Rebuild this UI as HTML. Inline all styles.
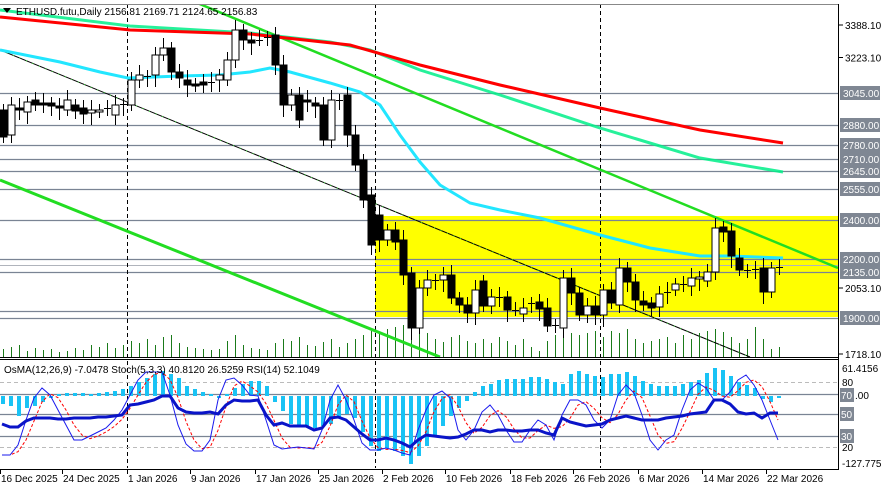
<!DOCTYPE html><html><head><meta charset="utf-8"><style>
html,body{margin:0;padding:0;background:#fff;overflow:hidden}
svg{display:block;font-family:"Liberation Sans",sans-serif}
</style></head><body>
<svg id="c" width="882" height="487" xmlns="http://www.w3.org/2000/svg">
<rect width="882" height="487" fill="#fff"/>
</svg>
<script>
const W=838;let s='';const F=10;
const py=p=>25+(3388.1-p)*0.197;
s+=`<rect x="375" y="216" width="463" height="101" fill="#ffff00"/>`;
[3045,2880,2780,2710,2645,2555,2400,2200,2135,1935,1900].forEach(p=>{const y=Math.round(py(p))+0.5;s+=`<line x1="0" x2="${W}" y1="${y}" y2="${y}" stroke="#7a8494" stroke-width="1.3"/>`});
s+=`<line x1="0" x2="${W}" y1="265.5" y2="265.5" stroke="#b0b4bc"/>`;
[127,375,600].forEach(x=>{s+=`<line x1="${x+.5}" x2="${x+.5}" y1="4" y2="468" stroke="#000" stroke-dasharray="4,3"/>`});
const vh=[8,10,12,6,9,7,8,5,6,9,7,12,10,14,9,12,16,14,18,12,20,22,14,10,9,8,7,8,16,22,12,9,8,7,14,18,16,20,12,11,15,18,10,14,18,22,26,25,28,30,32,35,30,24,18,15,20,22,16,14,18,14,20,16,12,18,10,6,16,22,28,24,22,24,26,20,26,24,28,18,14,16,18,20,14,22,18,24,26,28,25,20,14,18,30,18,8,10];
vh.forEach((h,i)=>{const x=8*i+3.5;s+=`<line x1="${x}" x2="${x}" y1="357" y2="${357-h}" stroke="#1a7a1a"/>`});
s+=`<line x1="0" y1="50" x2="750" y2="357" stroke="#000" stroke-width="1"/>`;
s+=`<line x1="0" y1="50" x2="750" y2="357" stroke="#33dd33" stroke-width="1" stroke-dasharray="1,6"/>`;
s+=`<line x1="0" y1="180" x2="440" y2="357" stroke="#22dd22" stroke-width="3"/>`;
s+=`<line x1="190" y1="0" x2="838" y2="268" stroke="#22dd22" stroke-width="2.5"/>`;
s+=`<polyline fill="none" stroke="#00ee88" stroke-opacity=".85" stroke-width="3" points="0,10 130,26 250,33 330,42 370,50 420,70 500,95 600,128 700,158 783,172"/>`;
s+=`<polyline fill="none" stroke="#ff0000" stroke-width="3" points="0,17 130,30 250,34 350,45 420,65 500,85 600,108 700,130 783,143"/>`;
s+=`<polyline fill="none" stroke="#22e6ff" stroke-width="3" points="0,50 60,62 100,72 128,78 180,76 220,75 250,72 270,68 290,72 330,83 360,92 380,105 400,135 420,162 440,185 470,203 500,210 540,218 600,235 650,248 700,256 730,256 783,258"/>`;
const C=[[110,137],[135,105],[108,110],[112,102],[100,105],[103,105],[103,106],[106,108],[110,100],[105,111],[108,114],[113,110],[112,110],[108,108],[115,105],[104,104],[105,80],[80,75],[77,76],[75,55],[55,48],[48,72],[72,78],[80,85],[84,86],[82,85],[82,82],[80,75],[80,60],[60,30],[30,40],[40,43],[40,40],[38,37],[35,65],[65,105],[105,95],[95,120],[100,102],[103,106],[105,140],[140,100],[100,100],[95,135],[135,165],[160,200],[195,245],[215,240],[240,230],[230,242],[240,275],[273,328],[328,288],[288,280],[280,280],[280,275],[275,298],[298,305],[305,313],[313,290],[281,306],[306,297],[297,297],[297,310],[310,310],[314,308],[303,303],[302,309],[308,326],[325,325],[328,278],[278,293],[293,315],[315,306],[306,315],[315,290],[290,303],[305,268],[268,282],[282,300],[301,305],[303,308],[307,294],[292,292],[290,284],[284,284],[286,278],[279,277],[281,272],[272,228],[227,232],[231,256],[258,270],[270,270],[269,269],[268,292],[292,268],[267,267]];
C.forEach(([o,c],i)=>{const x=8*i+3;const t=Math.min(o,c),b=Math.max(o,c);const hi=t-6-(i%3)*2,lo=b+6+(i%4)*2;
s+=`<line x1="${x+.5}" x2="${x+.5}" y1="${hi}" y2="${lo}" stroke="#000"/>`;
if(b-t<2)s+=`<line x1="${x-3}" x2="${x+4}" y1="${t+.5}" y2="${t+.5}" stroke="#000"/>`;
else s+=`<rect x="${x-3}" y="${t}" width="7" height="${b-t}" fill="${c<o?'#fff':'#000'}" stroke="#000"/>`});
s+=`<rect x="0" y="0" width="${W}" height="4" fill="#fff"/><line x1="0" x2="${W}" y1="4.5" y2="4.5" stroke="#888"/>`;
s+=`<line x1="${W}.5" x2="${W}.5" y1="4" y2="470" stroke="#000"/>`;
s+=`<line x1="0" x2="${W}" y1="357.5" y2="357.5" stroke="#000"/><line x1="0" x2="${W}" y1="359.5" y2="359.5" stroke="#000"/><line x1="0" x2="${W}" y1="469.5" y2="469.5" stroke="#000"/>`;
s+=`<text x="16" y="15" font-size="${F}">ETHUSD.futu,Daily  2156.81 2169.71 2124.65 2156.83</text><path d="M3 8h8l-4 5z" fill="#000"/>`;
[[3388.1,'3388.10'],[3223.1,'3223.10'],[2053.1,'2053.10'],[1718.1,'1718.10']].forEach(([p,t])=>{const y=py(p);s+=`<line x1="838" x2="843" y1="${y}" y2="${y}" stroke="#000"/><text x="845" y="${y+4}" font-size="${F}">${t}</text>`});
[[3045,'3045.00'],[2880,'2880.00'],[2780,'2780.00'],[2710,'2710.00'],[2645,'2645.00'],[2555,'2555.00'],[2400,'2400.00'],[2200,'2200.00'],[2135,'2135.00'],[1900,'1900.00']].forEach(([p,t])=>{const y=Math.round(py(p));s+=`<rect x="840" y="${y-7}" width="40" height="14" fill="#7f8793"/><text x="843" y="${y+4}" font-size="${F}" fill="#fff">${t}</text>`});
s+=`<line x1="0" x2="${W}" y1="382.5" y2="382.5" stroke="#bbb" stroke-dasharray="4,3"/><line x1="0" x2="${W}" y1="447.5" y2="447.5" stroke="#bbb" stroke-dasharray="4,3"/>`;
[394,414,436].forEach(y=>s+=`<line x1="0" x2="${W}" y1="${y+.5}" y2="${y+.5}" stroke="#7a8494" stroke-width="1.3"/>`);
const O=[-8,-10,-20,-12,-10,-6,-2,2,3,3,3,2,3,4,5,7,10,14,18,22,25,22,18,10,7,4,2,-2,2,8,12,15,15,10,-6,-15,-28,-30,-30,-32,-30,-28,-22,-18,-22,-36,-50,-55,-52,-55,-60,-68,-60,-50,-40,-30,-20,-12,-5,4,10,12,16,17,17,17,19,19,17,14,12,22,25,22,20,19,22,22,24,20,15,12,10,10,10,12,14,16,23,28,26,20,14,11,8,-3,-6,-2];
O.forEach((v,i)=>{const x=8*i+1;s+=`<rect x="${x}" y="${v>0?396-v:396}" width="4" height="${Math.abs(v)}" fill="#19c3f5"/>`});
const St=[455,455,445,420,398,388,395,410,425,440,440,436,432,428,420,410,395,380,372,372,372,395,425,444,451,451,440,400,380,378,385,395,396,420,445,449,448,447,448,449,430,400,385,400,420,443,450,450,448,450,453,455,430,410,395,391,398,430,440,430,412,405,415,430,442,442,430,420,425,440,415,400,400,405,420,428,420,395,385,393,415,440,450,440,435,410,390,383,388,400,400,392,380,375,385,400,420,440,452,459,444,425];
const pts=a=>a.map((y,i)=>`${8*i+2},${y}`).join(' ');
const Sg=St.map((v,i)=>i<2?v:(St[i]+St[i-1]+St[i-2])/3);
s+=`<polyline fill="none" stroke="#f00" stroke-dasharray="3,2" points="${pts(Sg.slice(0,98))}"/>`;
s+=`<polyline fill="none" stroke="#1a1aee" points="${pts(St.slice(0,98))}"/>`;
const R=[424,427,427,421,418,418,418,419,419,418,418,418,417,417,416,415,405,404,402,400,396,396,408,412,413,413,412,414,405,400,401,401,400,415,425,423,426,426,426,430,428,418,417,420,427,434,440,440,438,440,443,447,440,435,436,437,438,437,434,430,430,432,430,430,431,431,430,430,433,435,418,422,424,426,425,424,420,418,416,418,420,420,420,418,417,416,414,413,412,400,400,404,412,414,413,418,413,413];
s+=`<polyline fill="none" stroke="#0a14c8" stroke-width="3" points="${pts(R)}"/>`;
s+=`<text x="4" y="373" font-size="${F}">OsMA(12,26,9) -7.0478  Stoch(5,3,3) 40.8120 26.5259  RSI(14) 52.1049</text>`;
[[368,'61.4156'],[382,'80'],[447,'20'],[463,'-127.7756']].forEach(([y,t])=>s+=`<text x="842" y="${y+4}" font-size="${F}">${t}</text>`);
[[395,'70'],[414,'50'],[436,'30']].forEach(([y,t])=>s+=`<rect x="840" y="${y-7}" width="14" height="14" fill="#7f8793"/><text x="841" y="${y+4}" font-size="${F}" fill="#fff">${t}</text>`);
s+=`<text x="855" y="399" font-size="${F}">.00</text>`;
['16 Dec 2025','24 Dec 2025','1 Jan 2026','9 Jan 2026','17 Jan 2026','25 Jan 2026','2 Feb 2026','10 Feb 2026','18 Feb 2026','26 Feb 2026','6 Mar 2026','14 Mar 2026','22 Mar 2026'].forEach((t,i)=>{const x=[0,62,127,190,255,318,382,445,510,573,638,702,766][i];s+=`<line x1="${x+.5}" x2="${x+.5}" y1="470" y2="474" stroke="#000"/><text x="${x+1}" y="482" font-size="${F}">${t}</text>`});
document.getElementById('c').insertAdjacentHTML('beforeend',s);
</script>
</body></html>
